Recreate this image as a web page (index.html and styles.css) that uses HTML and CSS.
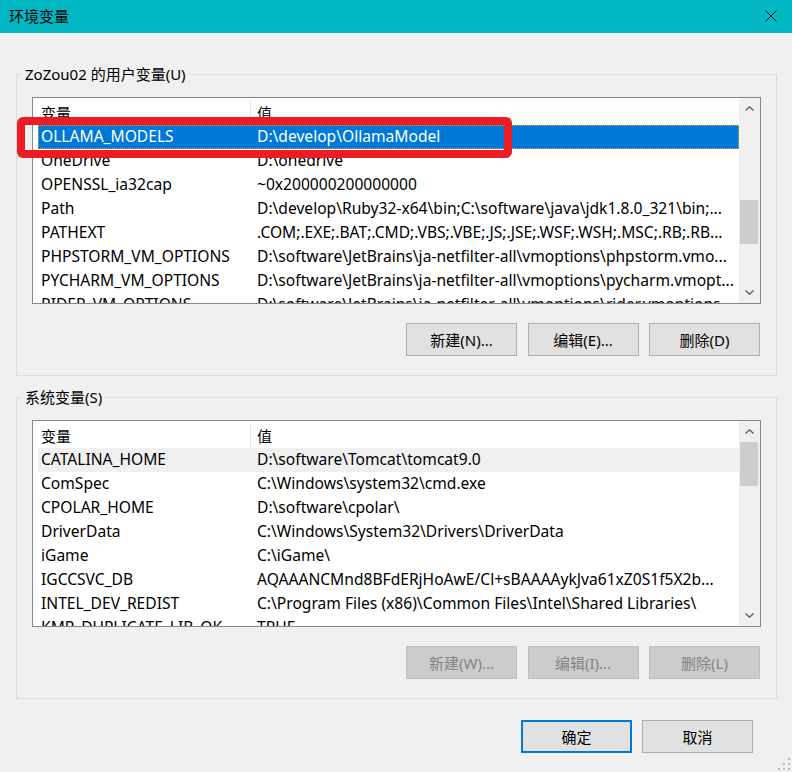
FILE: index.html
```html
<!DOCTYPE html>
<html lang="zh-CN">
<head>
    <meta charset="UTF-8">
    <meta name="viewport" content="width=device-width, initial-scale=1.0">
    <title>环境变量</title>
    <link rel="stylesheet" href="styles.css">
</head>
<body>

    <div class="window">
        <div class="titlebar">
            <span class="title">环境变量</span>
            <svg class="close" width="12" height="12" viewBox="0 0 12 12">
                <path d="M0.5 0.5L11.5 11.5M11.5 0.5L0.5 11.5" stroke="#000" stroke-width="1" fill="none"/>
            </svg>
        </div>

        <!-- user variables -->
        <fieldset class="group">
            <legend>ZoZou02 的用户变量(U)</legend>
            <div class="listbox">
                <div class="list">
                    <div class="list-head"><span class="name">变量</span><span class="value">值</span></div>
                    <div class="list-body">
                        <div class="row selected"><span class="name">OLLAMA_MODELS</span><span class="value">D:\develop\OllamaModel</span></div>
                        <div class="row"><span class="name">OneDrive</span><span class="value">D:\onedrive</span></div>
                        <div class="row"><span class="name">OPENSSL_ia32cap</span><span class="value">~0x200000200000000</span></div>
                        <div class="row"><span class="name">Path</span><span class="value">D:\develop\Ruby32-x64\bin;C:\software\java\jdk1.8.0_321\bin;...</span></div>
                        <div class="row"><span class="name">PATHEXT</span><span class="value">.COM;.EXE;.BAT;.CMD;.VBS;.VBE;.JS;.JSE;.WSF;.WSH;.MSC;.RB;.RB...</span></div>
                        <div class="row"><span class="name">PHPSTORM_VM_OPTIONS</span><span class="value">D:\software\JetBrains\ja-netfilter-all\vmoptions\phpstorm.vmo...</span></div>
                        <div class="row"><span class="name">PYCHARM_VM_OPTIONS</span><span class="value">D:\software\JetBrains\ja-netfilter-all\vmoptions\pycharm.vmopt...</span></div>
                        <div class="row"><span class="name">RIDER_VM_OPTIONS</span><span class="value">D:\software\JetBrains\ja-netfilter-all\vmoptions\rider.vmoptions</span></div>
                    </div>
                </div>
                <div class="scrollbar">
                    <div class="arrow"><svg width="9" height="5" viewBox="0 0 9 5"><path d="M0.5 4.5L4.5 0.8L8.5 4.5" stroke="#606060" stroke-width="1.4" fill="none"/></svg></div>
                    <div class="track"><div class="thumb thumb-user"></div></div>
                    <div class="arrow"><svg width="9" height="5" viewBox="0 0 9 5"><path d="M0.5 0.5L4.5 4.2L8.5 0.5" stroke="#606060" stroke-width="1.4" fill="none"/></svg></div>
                </div>
            </div>
            <div class="buttons">
                <button class="btn">新建(N)...</button>
                <button class="btn">编辑(E)...</button>
                <button class="btn">删除(D)</button>
            </div>
        </fieldset>

        <!-- system variables -->
        <fieldset class="group">
            <legend>系统变量(S)</legend>
            <div class="listbox">
                <div class="list">
                    <div class="list-head"><span class="name">变量</span><span class="value">值</span></div>
                    <div class="list-body">
                        <div class="row current"><span class="name">CATALINA_HOME</span><span class="value">D:\software\Tomcat\tomcat9.0</span></div>
                        <div class="row"><span class="name">ComSpec</span><span class="value">C:\Windows\system32\cmd.exe</span></div>
                        <div class="row"><span class="name">CPOLAR_HOME</span><span class="value">D:\software\cpolar\</span></div>
                        <div class="row"><span class="name">DriverData</span><span class="value">C:\Windows\System32\Drivers\DriverData</span></div>
                        <div class="row"><span class="name">iGame</span><span class="value">C:\iGame\</span></div>
                        <div class="row"><span class="name">IGCCSVC_DB</span><span class="value">AQAAANCMnd8BFdERjHoAwE/Cl+sBAAAAykJva61xZ0S1f5X2b...</span></div>
                        <div class="row"><span class="name">INTEL_DEV_REDIST</span><span class="value">C:\Program Files (x86)\Common Files\Intel\Shared Libraries\</span></div>
                        <div class="row"><span class="name">KMP_DUPLICATE_LIB_OK</span><span class="value">TRUE</span></div>
                    </div>
                </div>
                <div class="scrollbar">
                    <div class="arrow"><svg width="9" height="5" viewBox="0 0 9 5"><path d="M0.5 4.5L4.5 0.8L8.5 4.5" stroke="#606060" stroke-width="1.4" fill="none"/></svg></div>
                    <div class="track"><div class="thumb thumb-system"></div></div>
                    <div class="arrow"><svg width="9" height="5" viewBox="0 0 9 5"><path d="M0.5 0.5L4.5 4.2L8.5 0.5" stroke="#606060" stroke-width="1.4" fill="none"/></svg></div>
                </div>
            </div>
            <div class="buttons">
                <button class="btn" disabled>新建(W)...</button>
                <button class="btn" disabled>编辑(I)...</button>
                <button class="btn" disabled>删除(L)</button>
            </div>
        </fieldset>

        <div class="dialog-buttons">
            <button class="btn default">确定</button>
            <button class="btn">取消</button>
        </div>

        <!-- red annotation box around the selected row -->
        <div class="highlight"></div>

        <svg class="grip" width="12" height="12" viewBox="0 0 12 12">
            <rect x="10" y="0" width="2" height="2" fill="#b8b8b8"/>
            <rect x="5" y="5" width="2" height="2" fill="#b8b8b8"/>
            <rect x="10" y="5" width="2" height="2" fill="#b8b8b8"/>
            <rect x="0" y="10" width="2" height="2" fill="#b8b8b8"/>
            <rect x="5" y="10" width="2" height="2" fill="#b8b8b8"/>
            <rect x="10" y="10" width="2" height="2" fill="#b8b8b8"/>
        </svg>
    </div>

</body>
</html>
```

FILE: styles.css
```css
* {
    box-sizing: border-box;
}
body {
    margin: 0;
    background-color: #f0f0f0;
    font-family: "Noto Sans", "Noto Sans CJK SC", sans-serif;
    font-size: 15px;
    color: #000;
}
.window {
    position: relative; /* for the annotation and the grip */
    width: 792px;
    height: 772px;
    overflow: hidden;
    background-color: #f0f0f0;
}
.titlebar {
    height: 33px;
    display: flex;
    align-items: center;
    justify-content: space-between;
    padding: 0 15px 2px 9px;
    background-color: #00b7c3;
}
.close {
    display: block;
}

/* group boxes */
.group {
    margin: 32px 15px 0 16px;
    padding: 13px 0 19px;
    border: 1px solid #dcdcdc;
    min-width: 0;
}
.group + .group {
    margin-top: 12px;
}
.group legend {
    margin-left: 5px;
    padding: 0 3px;
    line-height: 19px;
}

/* list views */
.listbox {
    display: flex;
    height: 207px;
    margin: 0 15px;
    border: 1px solid #828790;
    background-color: #fff;
}
.list {
    flex: 1;
    min-width: 0;
}
.list-head,
.row {
    display: flex;
    margin-left: 5px;
    white-space: nowrap;
}
.list-head {
    height: 27px;
    padding-top: 3px;
    line-height: 24px;
}
.list-body {
    height: 178px;
    overflow: hidden;
}
.row {
    height: 24px;
    line-height: 23px;
    font-size: 15.6px;
}
.name {
    flex: none;
    width: 213px;
    padding-left: 3px;
    overflow: hidden;
}
.value {
    flex: 1;
    min-width: 0;
    padding-left: 6px;
    overflow: hidden;
}
.list-head .name {
    border-right: 1px solid #e5e5e5;
}
.row.selected {
    background-color: #0078d7;
    color: #fff;
    outline: 1px dotted #ff9a1f;
    outline-offset: -1px;
}
.row.current {
    background-color: #f0f0f0;
}

/* scrollbars */
.scrollbar {
    flex: none;
    width: 21px;
    display: flex;
    flex-direction: column;
    background-color: #f0f0f0;
}
.arrow {
    height: 21px;
    display: flex;
    align-items: center;
    justify-content: center;
}
.arrow svg {
    display: block;
}
.track {
    flex: 1;
    padding: 0 2px 0 1px;
}
.thumb {
    height: 44px;
    background-color: #cdcdcd;
}
.thumb-user {
    margin-top: 81px;
}
.thumb-system {
    margin-top: 0;
}

/* buttons */
.buttons {
    display: flex;
    justify-content: flex-end;
    gap: 10.5px;
    margin: 19px 16px 0 0;
}
.btn {
    width: 111px;
    height: 33px;
    padding: 0 0 1px;
    border: 1px solid #adadad;
    background-color: #e1e1e1;
    font: inherit;
    color: #000;
}
.btn:disabled {
    background-color: #cccccc;
    border-color: #bfbfbf;
    color: #838383;
}
.btn.default {
    border: 2px solid #0078d7;
}
.dialog-buttons {
    display: flex;
    justify-content: flex-end;
    gap: 10px;
    margin: 21px 39px 0 0;
}

/* overlays */
.highlight {
    position: absolute;
    left: 17px;
    top: 117px;
    width: 495px;
    height: 41px;
    border: 8px solid #ed1c24;
    border-radius: 6px;
}
.grip {
    position: absolute;
    right: 2px;
    bottom: 2px;
}
```
